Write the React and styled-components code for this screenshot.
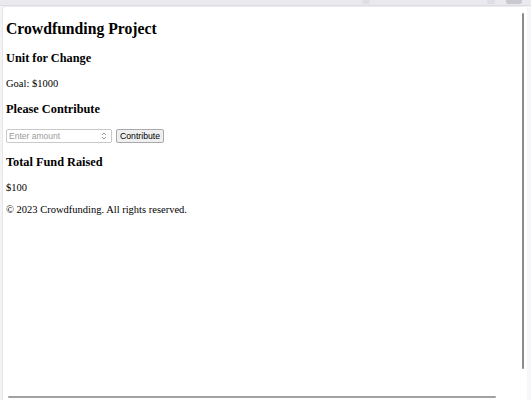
import React, { useState } from "react";
import styled, { createGlobalStyle } from "styled-components";

const Global = createGlobalStyle`
  html, body { margin: 0; padding: 0; }
  body { background: #f4f4f6; overflow: hidden; }
`;

const Frame = styled.div`
  height: 400px;
  display: flex;
  flex-direction: column;
  background: #f4f4f6;
`;

const TopBar = styled.div`
  height: 5px;
  flex: none;
  background: #e9e9ee;
  border-bottom: 1px solid #dcdce2;
  position: relative;
`;

const BarButton = styled.div`
  position: absolute;
  top: 0;
  left: ${(p) => p.$left}px;
  width: ${(p) => p.$width}px;
  height: 4px;
  border-radius: 0 0 2px 2px;
  background: ${(p) => p.$color};
`;

const Window = styled.div`
  flex: 1;
  display: flex;
  padding-left: 2px;
  min-height: 0;
`;

const Panel = styled.div`
  flex: 1;
  position: relative;
  background: #ffffff;
  border-left: 1px solid #e6e6ea;
  border-top: 1px solid #ececf0;
  border-top-left-radius: 4px;
  padding: 13px 4px 0 3px;
  font-family: "Liberation Serif", "Times New Roman", serif;
  color: #000;
`;

const RightGutter = styled.div`
  width: 4px;
  flex: none;
  background: #f7f7f9;
`;

const VThumb = styled.div`
  position: absolute;
  right: 3px;
  top: 6px;
  width: 2px;
  height: 356px;
  background: #8c8c8c;
  border-radius: 1px;
`;

const HThumb = styled.div`
  position: absolute;
  left: 5px;
  bottom: 2px;
  width: 488px;
  height: 2px;
  background: #a2a2a2;
  border-radius: 1px;
`;

const Title = styled.h2`
  font-size: 15.7px;
  font-weight: bold;
  margin: 0 0 13px;
  line-height: normal;
`;

const Heading = styled.h3`
  font-size: 12.3px;
  font-weight: bold;
  margin: 0 0 12.3px;
  line-height: normal;
`;

const Text = styled.p`
  font-size: 10.5px;
  margin: 0 0 ${(p) => p.$mb || 12.3}px;
  line-height: normal;
`;

const FormRow = styled.div`
  display: flex;
  align-items: center;
  gap: 4px;
  height: 14px;
  margin-bottom: 12px;
`;

const InputBox = styled.div`
  position: relative;
  width: 106px;
  height: 14px;
  box-sizing: border-box;
  border: 1px solid #c9c9cc;
  border-radius: 2px;
  background: #fff;
  display: flex;
  align-items: center;
`;

const AmountInput = styled.input`
  border: none;
  outline: none;
  background: transparent;
  width: 90px;
  height: 12px;
  padding: 0 0 0 2px;
  font-family: "Liberation Sans", Arial, sans-serif;
  font-size: 8.5px;
  color: #000;
  &::placeholder { color: #9b9b9b; }
`;

const Spinner = styled.svg`
  position: absolute;
  right: 4px;
  top: 1px;
`;

const Button = styled.button`
  height: 14px;
  box-sizing: border-box;
  padding: 0 3px;
  border: 1px solid #a9a9ad;
  border-radius: 2px;
  background: #efefef;
  font-family: "Liberation Sans", Arial, sans-serif;
  font-size: 8.7px;
  line-height: 1;
  color: #000;
  display: flex;
  align-items: center;
`;

export default function App() {
  const [amount, setAmount] = useState("");
  return (
    <>
      <Global />
      <Frame>
        <TopBar>
          <BarButton $left={362} $width={8} $color="#dedee4" />
          <BarButton $left={487} $width={8} $color="#dedee4" />
          <BarButton $left={506} $width={16} $color="#c9c9cf" />
        </TopBar>
        <Window>
          <Panel>
            <Title>Crowdfunding Project</Title>
            <Heading>Unit for Change</Heading>
            <Text>Goal: $1000</Text>
            <Heading>Please Contribute</Heading>
            <FormRow>
              <InputBox>
                <AmountInput
                  placeholder="Enter amount"
                  value={amount}
                  onChange={(e) => setAmount(e.target.value)}
                />
                <Spinner width="6" height="10" viewBox="0 0 6 10">
                  <path d="M1 4 L3 2 L5 4" fill="none" stroke="#8e8e8e" strokeWidth="0.9" />
                  <path d="M1 6 L3 8 L5 6" fill="none" stroke="#8e8e8e" strokeWidth="0.9" />
                </Spinner>
              </InputBox>
              <Button>Contribute</Button>
            </FormRow>
            <Heading>Total Fund Raised</Heading>
            <Text $mb={10.5}>$100</Text>
            <Text>© 2023 Crowdfunding. All rights reserved.</Text>
            <VThumb />
            <HThumb />
          </Panel>
          <RightGutter />
        </Window>
      </Frame>
    </>
  );
}
